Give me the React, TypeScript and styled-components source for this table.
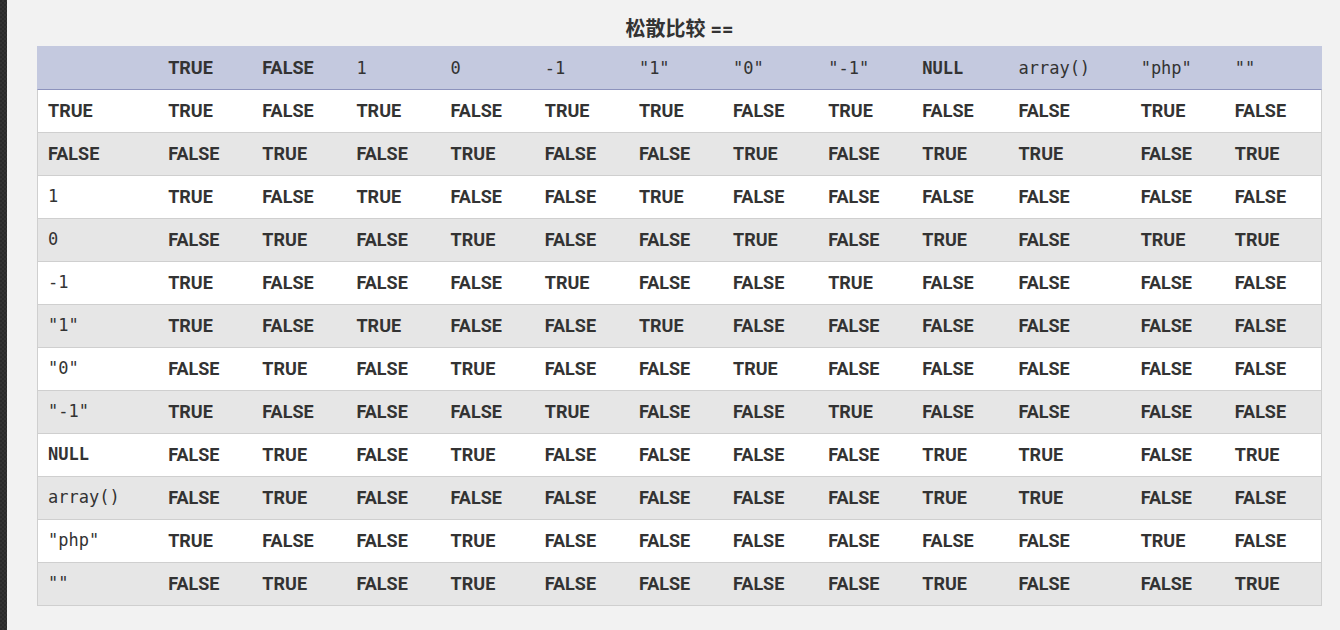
import React from "react";
import styled, { createGlobalStyle } from "styled-components";

const Global = createGlobalStyle`
  html, body { margin: 0; padding: 0; background: #f2f2f2; }
  body { font-family: Roboto, "Noto Sans", sans-serif; color: #333; }
`;

type Kind = "b" | "m" | "mb";
type Cell = { t: string; k: Kind };

const b = (t: string): Cell => ({ t, k: "b" });
const m = (t: string): Cell => ({ t, k: "m" });
const mb = (t: string): Cell => ({ t, k: "mb" });

const headers: Cell[] = [
  b("TRUE"), b("FALSE"), m("1"), m("0"), m("-1"), m('"1"'), m('"0"'), m('"-1"'),
  mb("NULL"), m("array()"), m('"php"'), m('""'),
];

const T = "TRUE";
const F = "FALSE";

const rows: { label: Cell; vals: string[] }[] = [
  { label: b("TRUE"), vals: [T, F, T, F, T, T, F, T, F, F, T, F] },
  { label: b("FALSE"), vals: [F, T, F, T, F, F, T, F, T, T, F, T] },
  { label: m("1"), vals: [T, F, T, F, F, T, F, F, F, F, F, F] },
  { label: m("0"), vals: [F, T, F, T, F, F, T, F, T, F, T, T] },
  { label: m("-1"), vals: [T, F, F, F, T, F, F, T, F, F, F, F] },
  { label: m('"1"'), vals: [T, F, T, F, F, T, F, F, F, F, F, F] },
  { label: m('"0"'), vals: [F, T, F, T, F, F, T, F, F, F, F, F] },
  { label: m('"-1"'), vals: [T, F, F, F, T, F, F, T, F, F, F, F] },
  { label: mb("NULL"), vals: [F, T, F, T, F, F, F, F, T, T, F, T] },
  { label: m("array()"), vals: [F, T, F, F, F, F, F, F, T, T, F, F] },
  { label: m('"php"'), vals: [T, F, F, T, F, F, F, F, F, F, T, F] },
  { label: m('""'), vals: [F, T, F, T, F, F, F, F, T, F, F, T] },
];

const colWidths = [121, 94, 94, 94, 94, 94, 94, 95, 94, 96, 122, 94, 97];

const Page = styled.div`
  display: flex;
  min-height: 630px;
`;

const Strip = styled.div`
  width: 7px;
  flex: none;
  background-color: #2a2a2a;
  background-image:
    linear-gradient(45deg, #333 25%, transparent 25%, transparent 75%, #333 75%),
    linear-gradient(45deg, #333 25%, transparent 25%, transparent 75%, #333 75%);
  background-size: 4px 4px;
  background-position: 0 0, 2px 2px;
`;

const Main = styled.main`
  padding-left: 30px;
`;

const Section = styled.section`
  width: 1285px;
`;

const Title = styled.h3`
  margin: 0;
  padding: 17px 0 5px;
  line-height: 24px;
  text-align: center;
  font-size: 20px;
  font-weight: 700;
  font-family: Roboto, "Noto Sans CJK SC", sans-serif;
  color: #333;
`;

const Table = styled.table`
  width: 1285px;
  table-layout: fixed;
  border-collapse: separate;
  border-spacing: 0;
`;

const Th = styled.th<{ $first?: boolean; $last?: boolean }>`
  height: 44px;
  padding: 0 0 0 10px;
  box-sizing: border-box;
  text-align: left;
  vertical-align: middle;
  background: #c4c9df;
  border-bottom: 1px solid #8d93bd;
  border-left: ${(p) => (p.$first ? "1px solid #c4c9df" : "0")};
  border-right: ${(p) => (p.$last ? "1px solid #c4c9df" : "0")};
  white-space: nowrap;
`;

const Tr = styled.tr<{ $alt: boolean }>`
  background: ${(p) => (p.$alt ? "#e6e6e6" : "#ffffff")};
`;

const Td = styled.td<{ $first?: boolean; $last?: boolean }>`
  height: 43px;
  padding: 0 0 2px 10px;
  box-sizing: border-box;
  text-align: left;
  vertical-align: middle;
  border-bottom: 1px solid #cfcfcf;
  border-left: ${(p) => (p.$first ? "1px solid #cfcfcf" : "0")};
  border-right: ${(p) => (p.$last ? "1px solid #cfcfcf" : "0")};
  white-space: nowrap;
`;

const Val = styled.span<{ $k: Kind }>`
  color: #333;
  font-family: ${(p) =>
    p.$k === "b" ? 'Roboto, "Noto Sans", sans-serif' : '"DejaVu Sans Mono", "Liberation Mono", monospace'};
  font-size: ${(p) => (p.$k === "b" ? "18px" : "17px")};
  font-weight: ${(p) => (p.$k === "m" ? 400 : 700)};
`;

export default function App() {
  return (
    <>
      <Global />
      <Page>
        <Strip />
        <Main>
          <Section>
            <Title>松散比较 ==</Title>
            <Table>
              <colgroup>
                {colWidths.map((w, i) => (
                  <col key={i} style={{ width: w }} />
                ))}
              </colgroup>
              <thead>
                <tr>
                  <Th $first />
                  {headers.map((h, i) => (
                    <Th key={i} $last={i === headers.length - 1}>
                      <Val $k={h.k}>{h.t}</Val>
                    </Th>
                  ))}
                </tr>
              </thead>
              <tbody>
                {rows.map((r, ri) => (
                  <Tr key={ri} $alt={ri % 2 === 1}>
                    <Td $first>
                      <Val $k={r.label.k}>{r.label.t}</Val>
                    </Td>
                    {r.vals.map((v, vi) => (
                      <Td key={vi} $last={vi === r.vals.length - 1}>
                        <Val $k="b">{v}</Val>
                      </Td>
                    ))}
                  </Tr>
                ))}
              </tbody>
            </Table>
          </Section>
        </Main>
      </Page>
    </>
  );
}
